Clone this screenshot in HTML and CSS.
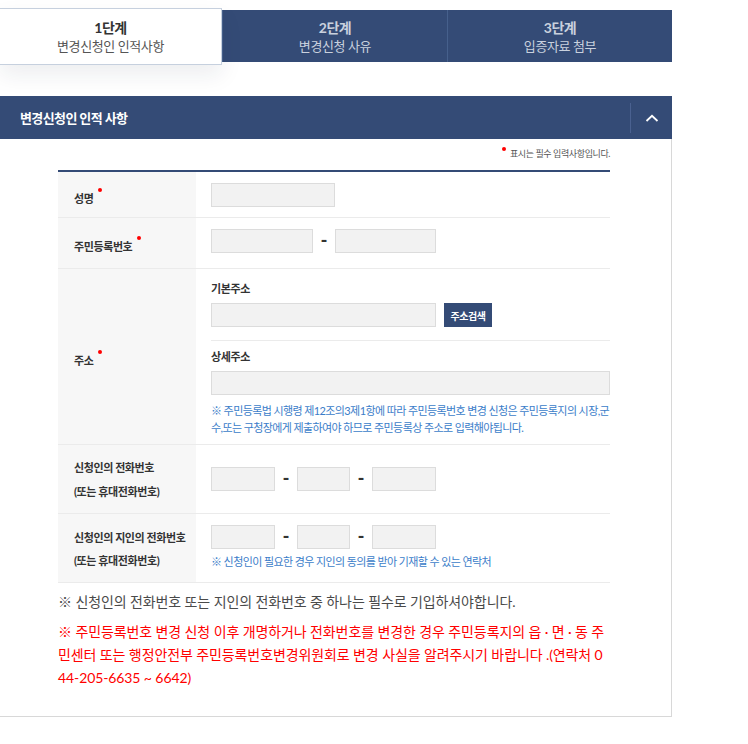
FILE: index.html
```
<!DOCTYPE html>
<html lang="ko">
<head>
    <meta charset="UTF-8">
    <meta name="viewport" content="width=device-width, initial-scale=1.0">
    <title>주민등록번호 변경신청</title>
    <link rel="stylesheet" href="styles.css">
</head>
<body>

    <div class="wrap">
        <!-- 단계 탭 -->
        <ul class="steps">
            <li class="step active">
                <strong>1단계</strong>
                <span>변경신청인 인적사항</span>
            </li>
            <li class="step">
                <strong>2단계</strong>
                <span>변경신청 사유</span>
            </li>
            <li class="step">
                <strong>3단계</strong>
                <span>입증자료 첨부</span>
            </li>
        </ul>

        <div class="section-head">
            <h2>변경신청인 인적 사항</h2>
            <button type="button" class="toggle" aria-label="접기">
                <svg width="14" height="8" viewBox="0 0 14 8"><polyline points="1.5,7 7,1.8 12.5,7" fill="none" stroke="#fff" stroke-width="1.8"/></svg>
            </button>
        </div>

        <div class="panel">
            <p class="req-note"><i class="req"></i>표시는 필수 입력사항입니다.</p>

            <div class="form-table">
                <div class="row row-name">
                    <div class="th"><span>성명<i class="req"></i></span></div>
                    <div class="td">
                        <input type="text" class="inp w124">
                    </div>
                </div>

                <div class="row row-rrn">
                    <div class="th"><span>주민등록번호<i class="req"></i></span></div>
                    <div class="td inline">
                        <input type="text" class="inp w102">
                        <span class="dash">-</span>
                        <input type="text" class="inp w101">
                    </div>
                </div>

                <div class="row row-addr">
                    <div class="th"><span>주소<i class="req"></i></span></div>
                    <div class="td addr">
                        <div class="addr-block">
                            <label>기본주소</label>
                            <div class="inline">
                                <input type="text" class="inp w225">
                                <button type="button" class="btn-search">주소검색</button>
                            </div>
                        </div>
                        <div class="addr-block detail">
                            <label>상세주소</label>
                            <input type="text" class="inp full">
                            <p class="help">※ 주민등록법 시행령 제12조의3제1항에 따라 주민등록번호 변경 신청은 주민등록지의 시장,군수,또는 구청장에게 제출하여야 하므로 주민등록상 주소로 입력해야됩니다.</p>
                        </div>
                    </div>
                </div>

                <div class="row row-tel">
                    <div class="th two">신청인의 전화번호<br>(또는 휴대전화번호)</div>
                    <div class="td inline">
                        <input type="text" class="inp w64">
                        <span class="dash">-</span>
                        <input type="text" class="inp w53">
                        <span class="dash">-</span>
                        <input type="text" class="inp w64">
                    </div>
                </div>

                <div class="row row-tel2">
                    <div class="th two">신청인의 지인의 전화번호<br>(또는 휴대전화번호)</div>
                    <div class="td">
                        <div class="inline">
                            <input type="text" class="inp w64">
                            <span class="dash">-</span>
                            <input type="text" class="inp w53">
                            <span class="dash">-</span>
                            <input type="text" class="inp w64">
                        </div>
                        <p class="help">※ 신청인이 필요한 경우 지인의 동의를 받아 기재할 수 있는 연락처</p>
                    </div>
                </div>
            </div>

            <p class="notice">※ 신청인의 전화번호 또는 지인의 전화번호 중 하나는 필수로 기입하셔야합니다.</p>
            <p class="notice red">※ 주민등록번호 변경 신청 이후 개명하거나 전화번호를 변경한 경우 주민등록지의 읍 · 면 · 동 주민센터 또는 행정안전부 주민등록번호변경위원회로 변경 사실을 알려주시기 바랍니다 .(연락처 044-205-6635 ~ 6642)</p>
        </div>
    </div>

</body>
</html>
```

FILE: styles.css
```
* {
    margin: 0;
    padding: 0;
    box-sizing: border-box;
}

body {
    font-family: Lato, 'Noto Sans CJK KR', sans-serif;
    background-color: #ffffff;
    color: #333;
}

.wrap {
    width: 672px;
}

/* 단계 탭 */
.steps {
    list-style: none;
    display: flex;
    height: 52px;
    margin-top: 10px;
    background-color: #344b76;
}

.step {
    flex: 1;
    display: flex;
    flex-direction: column;
    align-items: center;
    justify-content: center;
    color: #c9d1de;
    border-left: 1px solid #46608c;
}

.step:first-child {
    border-left: none;
}

.step strong {
    font-size: 14px;
    line-height: 19px;
    font-weight: 700;
    letter-spacing: -0.5px;
}

.step span {
    font-size: 13px;
    line-height: 18px;
    letter-spacing: -0.4px;
}

.step.active {
    position: relative;
    z-index: 1;
    margin: -2px 0 -3px;
    padding-bottom: 1px;
    flex: 0 0 222px;
    background-color: #fff;
    color: #333;
    border: 1px solid #c6d0de;
    border-left: none;
    box-shadow: 0 10px 22px rgba(30, 40, 70, 0.08);
}

.step.active span {
    color: #555;
}

/* 섹션 헤더 */
.section-head {
    display: flex;
    align-items: center;
    height: 43px;
    margin-top: 34px;
    padding-left: 20px;
    background-color: #344b76;
}

.section-head h2 {
    flex: 1;
    font-size: 13px;
    font-weight: 700;
    color: #fff;
    letter-spacing: -0.6px;
}

.toggle {
    width: 42px;
    height: 30px;
    border: none;
    border-left: 1px solid #4a6190;
    background: none;
    display: flex;
    align-items: center;
    justify-content: center;
    cursor: pointer;
}

/* 패널 */
.panel {
    padding: 8px 61px 27px 58px;
    border-right: 1px solid #d8d8d8;
    border-bottom: 1px solid #d8d8d8;
}

.req {
    display: inline-block;
    width: 4px;
    height: 4px;
    margin-left: 5px;
    border-radius: 50%;
    background-color: #f00;
    vertical-align: 11px;
}

.req-note {
    text-align: right;
    font-size: 9px;
    line-height: 14px;
    color: #555;
    letter-spacing: -0.4px;
    margin-bottom: 9px;
}

.req-note .req {
    margin: 0 4px 0 0;
    vertical-align: 6px;
}

.form-table {
    border-top: 2px solid #344b76;
}

.row {
    display: grid;
    grid-template-columns: 138px 1fr;
    border-bottom: 1px solid #ebebeb;
}

.th {
    display: flex;
    align-items: center;
    padding: 4px 0 0 16px;
    background-color: #f7f7f7;
    font-size: 11px;
    font-weight: 700;
    letter-spacing: -0.4px;
}

.th.two {
    display: block;
    padding: 11px 0 9px 16px;
    line-height: 24px;
}

.row-tel2 .th.two {
    padding: 12px 0 10px 16px;
    line-height: 23px;
}

.td {
    padding: 11px 0 10px 15px;
}

.inline {
    display: flex;
    align-items: center;
}

.row-rrn .td {
    padding: 11px 0 15px 15px;
}

.row-tel .td {
    padding: 0 0 0 15px;
}

.row-tel2 .td {
    padding: 11px 0 5px 15px;
}

.inp {
    display: block;
    height: 24px;
    background-color: #f2f2f2;
    border: 1px solid #dcdcdc;
    font-family: inherit;
    font-size: 11px;
    padding: 0 6px;
}

.w124 { width: 124px; }
.w102 { width: 102px; }
.w101 { width: 101px; }
.w225 { width: 225px; }
.w64 { width: 64px; }
.w53 { width: 53px; }
.full { width: 100%; }

.dash {
    width: 22px;
    margin-top: -3px;
    text-align: center;
    font-family: 'Noto Sans CJK KR', sans-serif;
    font-size: 17px;
    line-height: 20px;
    font-weight: 900;
    color: #333;
}

/* 주소 */
.td.addr {
    padding: 0 0 0 15px;
}

.addr-block {
    padding: 13px 0 13px;
}

.addr-block.detail {
    border-top: 1px solid #ebebeb;
    padding: 9px 0 8px;
}

.addr-block label {
    display: block;
    font-size: 11px;
    line-height: 14px;
    font-weight: 700;
    letter-spacing: -0.4px;
    margin-bottom: 7px;
}

.btn-search {
    width: 48px;
    height: 24px;
    margin-left: 8px;
    border: none;
    background-color: #344b76;
    color: #fff;
    font-family: inherit;
    font-size: 10px;
    font-weight: 700;
    letter-spacing: -0.5px;
}

.help {
    margin-top: 7px;
    font-size: 11px;
    line-height: 17px;
    color: #3b7dc9;
    letter-spacing: -0.6px;
}

.row-tel2 .help {
    margin-top: 4px;
}

/* 하단 안내 */
.notice {
    margin-top: 7px;
    font-size: 14px;
    line-height: 23px;
    color: #4a4a4a;
    letter-spacing: -0.1px;
    word-break: break-all;
}

.notice.red {
    color: #f00;
}
```
